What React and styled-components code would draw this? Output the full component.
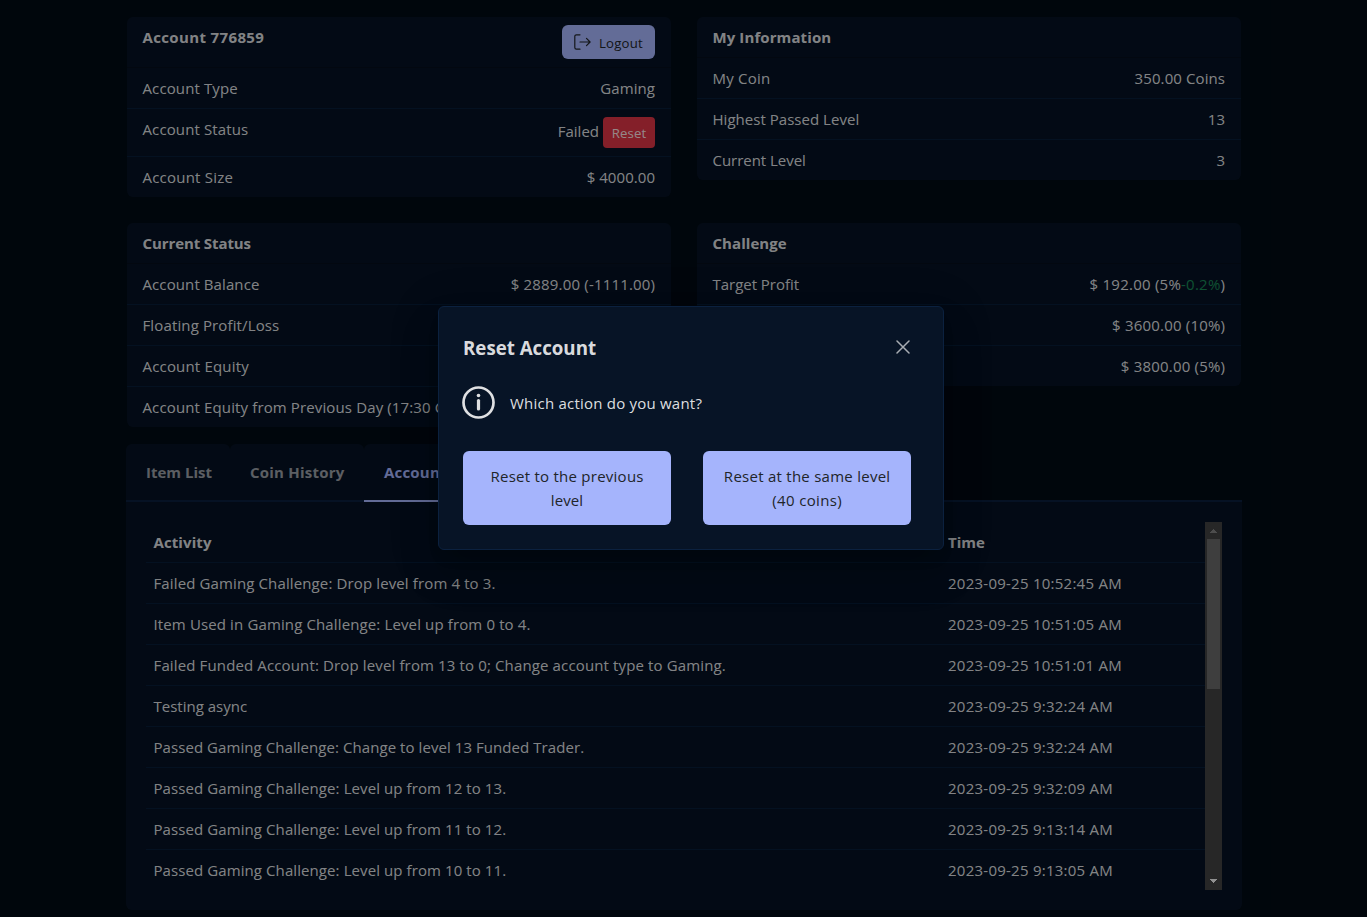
import React from "react";
import styled, { createGlobalStyle } from "styled-components";

const Global = createGlobalStyle`
  *, *::before, *::after { box-sizing: border-box; }
  html, body { margin: 0; height: 917px; overflow: hidden; background: #010a14; }
  body {
    font-family: "Open Sans", "Noto Sans", sans-serif;
    font-size: 15px;
    line-height: 24px;
    color: rgba(255, 255, 255, 0.87);
  }
`;

const Page = styled.main`
  position: relative;
  width: 1367px;
  height: 917px;
  padding: 17px 125px 0 126px;
  overflow: hidden;
`;
const Cards = styled.div`
  display: grid;
  grid-template-columns: 544px 544px;
  gap: 26px;
  align-items: start;
  padding-left: 1px;
`;
const Card = styled.section`
  background: #061224;
  border-radius: 6px;
`;
const CardHead = styled.header`
  display: flex;
  justify-content: space-between;
  align-items: flex-start;
  padding: 8px 16px 8px 15.5px;
`;
const Row = styled.div`
  display: flex;
  justify-content: space-between;
  align-items: flex-start;
  padding: 8px 16px 8px 15.5px;
  border-top: 1px solid ${(p) => (p.$first ? "#050e1c" : "#081d38")};
`;
const T = styled.span`
  letter-spacing: ${(p) => p.$ls ?? 0}px;
  margin-right: ${(p) => -(p.$ls ?? 0)}px;
  white-space: nowrap;
`;
const Title = styled(T)`
  font-weight: 700;
`;
const Green = styled.span`
  color: #198754;
`;
const Status = styled.div`
  display: flex;
  align-items: flex-start;
  gap: 4px;
  line-height: 29px;
`;
const LogoutButton = styled.button`
  display: flex;
  align-items: center;
  width: 93px;
  height: 34px;
  padding: 0 12px;
  gap: 7px;
  border: 0;
  border-radius: 6px;
  background: #a5b4fc;
  color: #212529;
  font: 500 13.200px/20px "Open Sans", sans-serif;
  svg { flex: none; }
  span { padding: 2px 0 0 1px; }
`;
const ResetButton = styled.button`
  width: 52px;
  height: 31px;
  padding: 2px 0 0;
  border: 0;
  border-radius: 4px;
  background: #dc3545;
  color: rgba(255, 255, 255, 0.87);
  font: 400 13.200px/21px "Open Sans", sans-serif;
`;

const Tabs = styled.nav`
  display: flex;
  height: 58px;
  margin-top: 17px;
  border-bottom: 2px solid #0a1f3c;
`;
const Tab = styled.div`
  width: ${(p) => p.$w}px;
  height: 58px;
  padding: 16px 0 0 20px;
  border-bottom: 2px solid ${(p) => (p.$active ? "#a5b4fc" : "#0a1f3c")};
  border-radius: 6px 6px 0 0;
  background: #061224;
  color: ${(p) => (p.$active ? "#a5b4fc" : "rgba(255,255,255,0.6)")};
  font-weight: 700;
`;
const Panel = styled.section`
  height: 408px;
  padding: 20px;
  background: #061224;
  border-radius: 0 0 6px 6px;
`;
const Scroller = styled.div`
  display: flex;
  height: 368px;
  overflow: hidden;
`;
const Table = styled.div`
  flex: 1;
`;
const TableRow = styled.div`
  display: grid;
  grid-template-columns: 794.500px 1fr;
  height: 41px;
  padding: 8px 8px 8px 7.500px;
  border-bottom: 1px solid #081d38;
  font-weight: ${(p) => (p.$head ? 700 : 400)};
`;
const Bar = styled.div`
  display: flex;
  flex-direction: column;
  align-items: center;
  width: 17px;
  background: #424242;
`;
const Thumb = styled.div`
  width: 13px;
  height: 150px;
  margin-bottom: auto;
  background: #686868;
`;

const Overlay = styled.div`
  position: absolute;
  inset: 0;
  background: rgba(0, 0, 0, 0.4);
`;
const Dialog = styled.div`
  position: absolute;
  left: 438px;
  top: 306px;
  width: 506px;
  height: 244px;
  padding: 23px 24px;
  background: #071426;
  border: 1px solid #0b213f;
  border-radius: 6px;
  box-shadow: 0 11px 15px -7px rgba(0, 0, 0, 0.2), 0 24px 38px 3px rgba(0, 0, 0, 0.14),
    0 9px 46px 8px rgba(0, 0, 0, 0.12);
`;
const DialogHead = styled.header`
  display: flex;
  justify-content: space-between;
  align-items: center;
  height: 36px;
  padding-right: 9px;
  font-size: 18.7px;
  font-weight: 700;
  svg { margin-top: -2px; }
`;
const Message = styled.div`
  display: flex;
  align-items: center;
  gap: 15px;
  height: 34px;
  margin: 20px 0 31px -1px;
  svg { margin-top: -1px; }
`;
const Actions = styled.div`
  display: flex;
  gap: 32px;
`;
const Action = styled.button`
  display: flex;
  flex-direction: column;
  align-items: center;
  width: 208px;
  height: 74px;
  padding: 13px 0;
  border: 0;
  border-radius: 6px;
  background: #a5b4fc;
  color: #212529;
  font: 500 15px/24px "Open Sans", sans-serif;
`;

const activity = [
  ["Failed Gaming Challenge: Drop level from 4 to 3.", "2023-09-25 10:52:45 AM", 0.125],
  ["Item Used in Gaming Challenge: Level up from 0 to 4.", "2023-09-25 10:51:05 AM", 0.13],
  ["Failed Funded Account: Drop level from 13 to 0; Change account type to Gaming.", "2023-09-25 10:51:01 AM", 0.135],
  ["Testing async", "2023-09-25 9:32:24 AM", 0],
  ["Passed Gaming Challenge: Change to level 13 Funded Trader.", "2023-09-25 9:32:24 AM", 0.065],
  ["Passed Gaming Challenge: Level up from 12 to 13.", "2023-09-25 9:32:09 AM", 0.09],
  ["Passed Gaming Challenge: Level up from 11 to 12.", "2023-09-25 9:13:14 AM", 0.09],
  ["Passed Gaming Challenge: Level up from 10 to 11.", "2023-09-25 9:13:05 AM", 0.09],
];

const Line = ({ label, children, first, ls = 0.1, vls = 0 }) => (
  <Row $first={first}>
    <T $ls={ls}>{label}</T>
    <T $ls={vls}>{children}</T>
  </Row>
);

export default function App() {
  return (
    <>
      <Global />
      <Page>
        <Cards>
          <Card>
            <CardHead>
              <Title $ls={0.36}>Account 776859</Title>
              <LogoutButton>
                <svg width="17" height="16" viewBox="0 0 17 16" fill="none" stroke="currentColor" strokeWidth="1.2" strokeLinecap="round" strokeLinejoin="round">
                  <path d="M6 .8H2.4A1.6 1.6 0 0 0 .8 2.4v11.2a1.6 1.6 0 0 0 1.6 1.6H6M6 8h10M12.5 4.4 16.1 8l-3.6 3.6" />
                </svg>
                <T $ls={0.2}>Logout</T>
              </LogoutButton>
            </CardHead>
            <Line first label="Account Type" ls={0.12} vls={0.1}>Gaming</Line>
            <Row>
              <T $ls={0.12}>Account Status</T>
              <Status>
                <T>Failed</T>
                <ResetButton><T $ls={0.1}>Reset</T></ResetButton>
              </Status>
            </Row>
            <Line label="Account Size" ls={0.22} vls={0.06}>$ 4000.00</Line>
          </Card>
          <Card>
            <CardHead><Title $ls={0.1}>My Information</Title></CardHead>
            <Line first label="My Coin" ls={0.24} vls={0.1}>350.00 Coins</Line>
            <Line label="Highest Passed Level" ls={0.03}>13</Line>
            <Line label="Current Level" ls={-0.03}>3</Line>
          </Card>
          <Card>
            <CardHead><Title $ls={-0.1}>Current Status</Title></CardHead>
            <Line first label="Account Balance" vls={0.18}>$ 2889.00 (-1111.00)</Line>
            <Line label="Floating Profit/Loss" ls={0.13} />
            <Line label="Account Equity" ls={0.18} />
            <Line label="Account Equity from Previous Day (17:30 C" ls={0.13} />
          </Card>
          <Card>
            <CardHead><Title $ls={0.05}>Challenge</Title></CardHead>
            <Line first label="Target Profit" ls={-0.03} vls={0.24}>$ 192.00 (5%<Green>-0.2%</Green>)</Line>
            <Line vls={0.2}>$ 3600.00 (10%)</Line>
            <Line vls={0.2}>$ 3800.00 (5%)</Line>
          </Card>
        </Cards>
        <Tabs>
          <Tab $w={104}><T>Item List</T></Tab>
          <Tab $w={134}><T $ls={0.22}>Coin History</T></Tab>
          <Tab $w={150} $active><T $ls={0.2}>Account</T></Tab>
        </Tabs>
        <Panel>
          <Scroller>
            <Table>
              <TableRow $head><T $ls={0.1}>Activity</T><T>Time</T></TableRow>
              {activity.map(([what, when, ls]) => (
                <TableRow key={what}><T $ls={ls}>{what}</T><T $ls={0.25}>{when}</T></TableRow>
              ))}
            </Table>
            <Bar>
              <svg width="17" height="17" viewBox="0 0 17 17" shapeRendering="crispEdges"><path d="M5 11h7L8.5 7z" fill="#808080" /></svg>
              <Thumb />
              <svg width="17" height="17" viewBox="0 0 17 17" shapeRendering="crispEdges"><path d="M5 6h7l-3.500 4z" fill="#f0f0f0" /></svg>
            </Bar>
          </Scroller>
        </Panel>
        <Overlay />
        <Dialog role="dialog">
          <DialogHead>
            <T>Reset Account</T>
            <svg width="14" height="14" viewBox="0 0 14 14" stroke="rgba(255,255,255,.65)" strokeWidth="1.5" strokeLinecap="round">
              <path d="M1 1l12 12M13 1 1 13" />
            </svg>
          </DialogHead>
          <Message>
            <svg width="33" height="33" viewBox="0 0 33 33" fill="none" stroke="#dfe0e2" strokeLinecap="round">
              <circle cx="16.500" cy="16.500" r="15" strokeWidth="2.700" />
              <path d="M16.500 14.500v8.500" strokeWidth="3.200" />
              <circle cx="16.500" cy="9.500" r="1.800" fill="#dfe0e2" stroke="none" />
            </svg>
            <T $ls={0.22}>Which action do you want?</T>
          </Message>
          <Actions>
            <Action><T $ls={0.25}>Reset to the previous</T><T $ls={0.1}>level</T></Action>
            <Action><T $ls={0.26}>Reset at the same level</T><T $ls={0.35}>(40 coins)</T></Action>
          </Actions>
        </Dialog>
      </Page>
    </>
  );
}
